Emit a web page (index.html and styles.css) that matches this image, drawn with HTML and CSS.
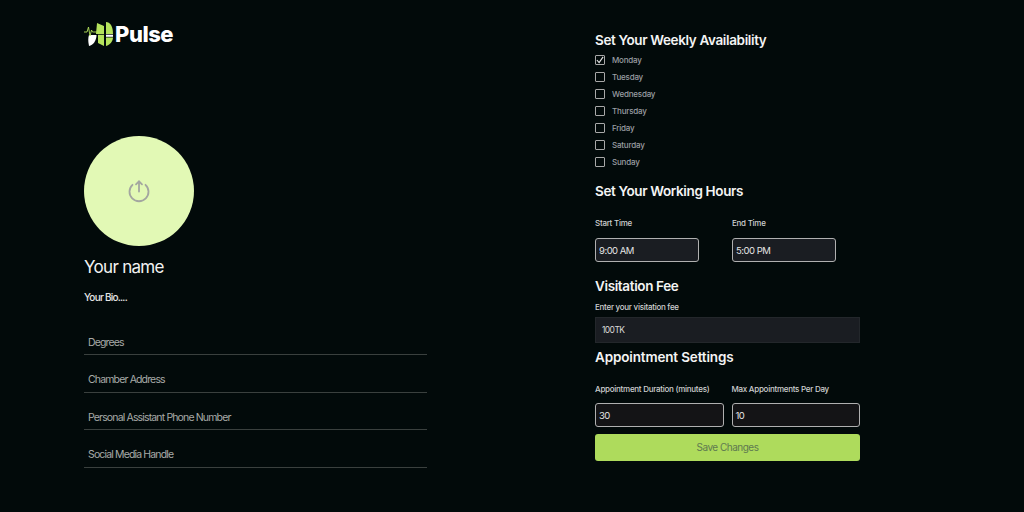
FILE: index.html
```html
<!DOCTYPE html>
<html lang="en">
<head>
    <meta charset="UTF-8">
    <title>Pulse - Doctor Profile</title>
    <link rel="stylesheet" href="styles.css">
</head>
<body>
    <div class="page">
        <div class="left-col">
            <div class="logo">
                <svg class="logo-mark" width="30" height="26" viewBox="0 0 30 26">
                    <path d="M13 2 L20 5 V13 H12 Z" fill="#b5e35c"/>
                    <path d="M22 1 C26 1 29 5 29 13 H22 Z" fill="#b5e35c"/>
                    <path d="M14 13.700 H20 V25 L14 22 Z" fill="#b5e35c"/>
                    <path d="M22 16.500 H29 C29 20 26 24 22 25 Z" fill="#b5e35c"/>
                    <path d="M22 13.700 H29 V15.800 H22 Z" fill="#ffffff"/>
                    <path d="M5 14 H12.500 C12.500 20 9 24 5 25 C4 20 4 17 5 14 Z" fill="#ffffff"/>
                    <path d="M0 11 H3 L4.500 6 L6 15 L7.500 9 L8.500 11 H13" fill="none" stroke="#b5e35c" stroke-width="0.9"/>
                </svg>
                <span class="logo-text">Pulse</span>
            </div>

            <div class="avatar">
                <svg width="24" height="24" viewBox="0 0 24 24" fill="none" stroke="#a3a6a0" stroke-width="1.800" stroke-linecap="round">
                    <path d="M5.500 5.800 A9.500 9.500 0 1 0 18.500 5.800"/>
                    <path d="M12 12.500 V2.500 M9 5.300 L12 2.300 L15 5.300"/>
                </svg>
            </div>
            <div class="name">Your name</div>
            <div class="bio">Your Bio....</div>

            <div class="line-field">Degrees</div>
            <div class="line-field">Chamber Address</div>
            <div class="line-field">Personal Assistant Phone Number</div>
            <div class="line-field">Social Media Handle</div>
        </div>

        <div class="right-col">
            <h2>Set Your Weekly Availability</h2>
            <div class="days">
                <div class="day"><span class="check">
                    <svg width="8" height="8" viewBox="0 0 9 9" fill="none" stroke="#e6e6e6" stroke-width="1.300"><path d="M1 4.500 L3.500 7.500 L8 1"/></svg>
                </span>Monday</div>
                <div class="day"><span class="check"></span>Tuesday</div>
                <div class="day"><span class="check"></span>Wednesday</div>
                <div class="day"><span class="check"></span>Thursday</div>
                <div class="day"><span class="check"></span>Friday</div>
                <div class="day"><span class="check"></span>Saturday</div>
                <div class="day"><span class="check"></span>Sunday</div>
            </div>

            <h2 class="hours-title">Set Your Working Hours</h2>
            <div class="hours">
                <div class="hour-field">
                    <label>Start Time</label>
                    <div class="box">9:00 AM</div>
                </div>
                <div class="hour-field">
                    <label>End Time</label>
                    <div class="box">5:00 PM</div>
                </div>
            </div>

            <h2 class="fee-title">Visitation Fee</h2>
            <label class="fee-label">Enter your visitation fee</label>
            <div class="fee-box">100TK</div>

            <h2 class="appt-title">Appointment Settings</h2>
            <div class="appt">
                <div class="appt-field">
                    <label>Appointment Duration (minutes)</label>
                    <div class="box box-dark">30</div>
                </div>
                <div class="appt-field">
                    <label>Max Appointments Per Day</label>
                    <div class="box box-dark">10</div>
                </div>
            </div>
            <button class="save">Save Changes</button>
        </div>
    </div>
</body>
</html>
```

FILE: styles.css
```css
* {
    margin: 0;
    padding: 0;
    box-sizing: border-box;
}

body {
    font-family: 'Inter', sans-serif;
    background-color: #020a0a;
    color: #fff;
    overflow: hidden;
}

.page {
    display: flex;
    height: 512px;
    padding-left: 84px;
}

.left-col {
    width: 343px;
    padding-top: 21px;
}

.logo {
    display: flex;
    align-items: center;
    gap: 1px;
    height: 26px;
}

.logo-text {
    font-size: 22px;
    font-weight: 800;
    letter-spacing: -0.45px;
}

.avatar {
    width: 110px;
    height: 110px;
    margin-top: 89px;
    border-radius: 50%;
    background-color: #e2f9b5;
    display: flex;
    align-items: center;
    justify-content: center;
}

.name {
    margin-top: 10px;
    font-size: 17px;
    line-height: 22px;
    letter-spacing: -0.7px;
    color: #f2f2f2;
}

.bio {
    margin-top: 12px;
    margin-bottom: 14px;
    font-size: 10px;
    line-height: 14px;
    font-weight: 500;
    letter-spacing: -0.75px;
    color: #e6e6e6;
}

.line-field {
    height: 37.400px;
    padding: 18px 0 0 4px;
    font-size: 10.500px;
    line-height: 14px;
    letter-spacing: -0.85px;
    color: #a8aaa8;
    border-bottom: 1px solid #3a403e;
}

.right-col {
    width: 265px;
    margin-left: 168px;
    padding-top: 31px;
}

h2 {
    font-size: 13.500px;
    line-height: 18px;
    font-weight: 600;
    letter-spacing: -0.36px;
    color: #f4f4f4;
}

.days {
    margin-top: 2px;
}

.day {
    display: flex;
    align-items: center;
    gap: 7px;
    height: 17.100px;
    font-size: 8px;
    font-weight: 500;
    letter-spacing: -0.2px;
    color: #9a9ea3;
}

.check {
    width: 10px;
    height: 10px;
    border: 1px solid #a8a8a8;
    border-radius: 1px;
    display: flex;
    align-items: center;
    justify-content: center;
}

.hours-title {
    margin-top: 11px;
}

.hours {
    display: flex;
    gap: 33px;
    margin-top: 17px;
}

.hour-field {
    width: 104px;
}

label {
    display: block;
    font-size: 8px;
    line-height: 12px;
    font-weight: 500;
    letter-spacing: -0.27px;
    color: #cfd0d0;
}

.box {
    height: 24px;
    margin-top: 9px;
    padding: 1px 0 0 3px;
    display: flex;
    align-items: center;
    font-size: 9.500px;
    letter-spacing: -0.5px;
    color: #e4e4e4;
    background-color: #1a1d22;
    border: 1px solid #b0b0b0;
    border-radius: 3px;
}

.fee-title {
    margin-top: 15px;
}

.fee-label {
    margin-top: 6px;
}

.fee-box {
    height: 26px;
    margin-top: 4px;
    padding-left: 6px;
    display: flex;
    align-items: center;
    font-size: 8.500px;
    letter-spacing: -0.6px;
    color: #d8d8d8;
    background-color: #1a1d22;
    border: 1px solid #23272b;
}

.appt-title {
    margin-top: 5px;
    letter-spacing: -0.15px;
}

.appt {
    display: flex;
    gap: 8px;
    margin-top: 17px;
}

.appt-field {
    flex: 1;
}

.box-dark {
    margin-top: 8px;
    background-color: #141416;
}

.save {
    display: block;
    width: 100%;
    height: 27px;
    margin-top: 7px;
    border: none;
    border-radius: 3px;
    background-color: #aedb5c;
    color: #5f7a50;
    font-family: 'Inter', sans-serif;
    font-size: 10px;
    letter-spacing: -0.5px;
}
```
